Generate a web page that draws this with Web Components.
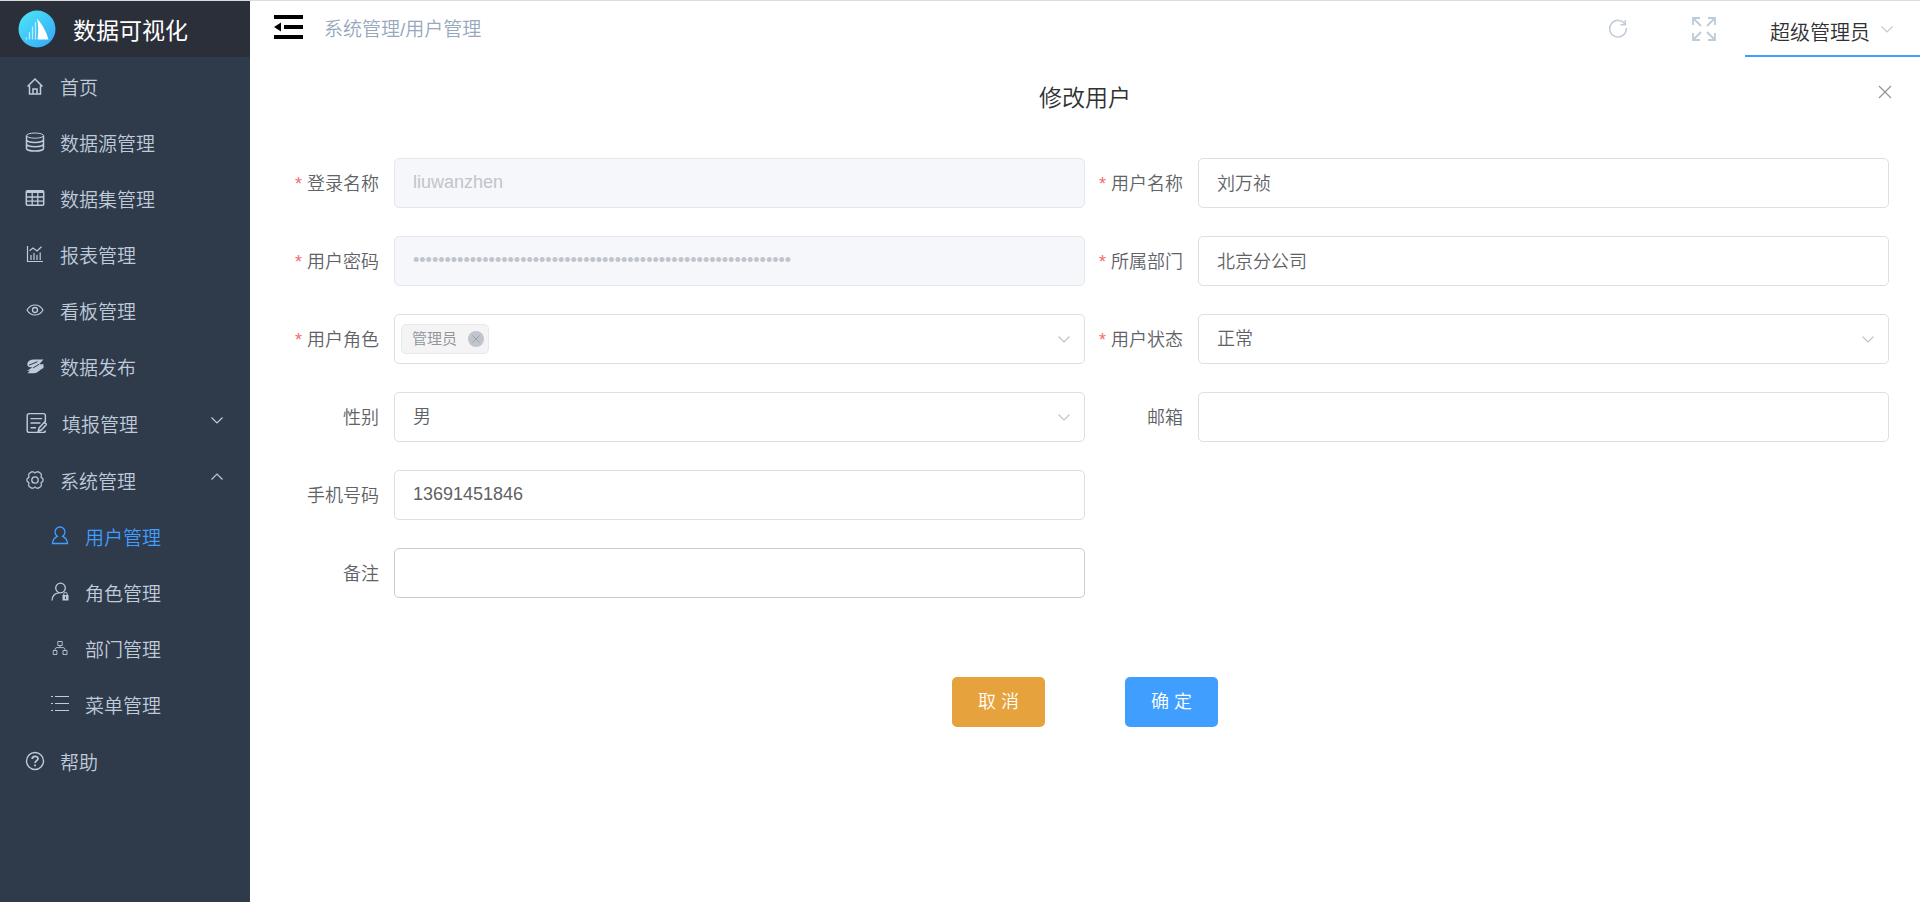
<!DOCTYPE html>
<html lang="zh-CN">
<head>
<meta charset="utf-8">
<title>数据可视化</title>
<style>
  body { margin: 0; font-family: "Liberation Sans", "Noto Sans CJK SC", sans-serif; font-weight: 350; background: #fff; color: #303133; }
</style>
</head>
<body>
<admin-app></admin-app>

<script>
const ICONS = {
  home: '<path d="M2.500 10.500 10 3l7.500 7.500M4.500 9.500V18h11V9.500M8 18v-5h4v5" stroke-width="1.500"/>',
  database: '<ellipse cx="10" cy="3.600" rx="8.500" ry="2.600"/><path d="M1.500 3.600v12.800c0 1.500 3.800 2.700 8.500 2.700s8.500-1.200 8.500-2.700V3.600M1.500 7.800c0 1.500 3.800 2.700 8.500 2.700s8.500-1.200 8.500-2.700M1.500 12c0 1.500 3.800 2.700 8.500 2.700s8.500-1.200 8.500-2.700" stroke-width="1.500"/>',
  table: '<rect x="1.300" y="2.700" width="17.400" height="14.600" rx="1" stroke-width="1.500"/><path d="M1.300 4h17.400" stroke-width="2"/><path d="M1.300 9h17.400M1.300 13.200h17.400M7.200 5v12M12.800 5v12" stroke-width="1.300"/>',
  chart: '<path d="M2.500 2v15.500H18M4.500 6.800 8 4l4 3 4.500-4.300M6 16v-5M9 16V9M12 16v-5M15.200 16V8.500" stroke-width="1.200"/>',
  eye: '<path d="M2 10c2-3.500 5-5 8-5s6 1.500 8 5c-2 3.500-5 5-8 5s-6-1.500-8-5Z" stroke-width="1.200"/><circle cx="10" cy="10" r="2.500" stroke-width="1.300"/>',
  publish: '<path fill="currentColor" stroke="none" d="M18.500 3.500H8.500C4 3.500 1.500 7 2.500 9.500c.6 1.500 2.500 2 5 1.800L1.800 15l3.200-.6-2.500 2.800h6.300c4.200 0 5.500-3.400 9.700-5.200V8.300h-4.300Z"/><path d="m4 9.200 8.500-3.500M8 12l6-3.700" stroke="#2f3a4b" stroke-width="1"/>',
  form: '<path d="M18.500 9V3.200A1.700 1.700 0 0 0 16.800 1.500H3.700A1.700 1.700 0 0 0 2 3.200v13.600a1.700 1.700 0 0 0 1.700 1.700h13.100a1.700 1.700 0 0 0 1.700-1.700M5 6h10.500M5 10h9M5 14.300h5M12 17.500l.8-3 4.800-5.200 2 1.900-4.800 5.200Z" stroke-width="1.300"/>',
  gear: '<path d="M6.500 1.900h2l1.500 1.200 1.500-1.200h2l2.500 1.700.4 1.900-.4 1.500 2 2v2l-2 2 .4 1.500-.4 1.900-2.500 1.700h-2L10 16.900l-1.500 1.200h-2L4 16.400l-.4-1.900L4 13l-2-2V9l2-2-.4-1.500.4-1.900Z" stroke-width="1.200"/><circle cx="10" cy="10" r="3.200" stroke-width="1.300"/>',
  user: '<path d="M7.300 10.300C5.700 9 5 7.800 5 6a5 5 0 0 1 10 0c0 1.800-.7 3-2.300 4.300 3 1.400 4.500 3.200 4.800 7.200h-15c.3-4 1.800-5.800 4.800-7.200Z" stroke-width="1.300"/>',
  role: '<circle cx="10.500" cy="6" r="4.800" stroke-width="1.300"/><path d="M2 18.500c.3-4.500 2.500-7.500 7-7.700" stroke-width="1.300"/><rect x="12.500" y="13" width="6" height="5.500" fill="currentColor" stroke="none"/><path d="M13.800 13v-1a1.700 1.700 0 0 1 3.400 0v1"/><path d="M15.500 14.500v2.500" stroke="#2f3a4b"/>',
  tree: '<path d="M7.800 3.500h4.400v4H7.800ZM3.200 12.500h3.700v4H3.200ZM13 12.500h4v4h-4ZM10 7.500v2M5 12.500c0-2 .4-2.900 2-2.900h6c1.600 0 2 .9 2 2.900" stroke-width=".9"/>',
  list: '<path d="M5 2.500h14M5 9.500h14M5 16.500h14M1 2.500h2M1 9.500h2M1 16.500h2"/>',
  help: '<circle cx="10" cy="10" r="8.500" stroke-width="1.400"/><path d="M7.200 8c0-3.600 5.800-3.500 5.800-.3 0 1.900-2.900 2-2.900 4.300M10.100 13.500v1.700" stroke-width="1.800"/>',
  down: '<path d="m4.500 7.500 5.500 5.500 5.500-5.500" stroke-width="1.200"/>',
  up: '<path d="m4.500 12.500 5.500-5.500 5.500 5.500" stroke-width="1.200"/>',
  refresh: '<path d="M17.200 6.500A8.300 8.300 0 1 0 18.300 10M17.300 2v4.800h-4.800" stroke-width="1.500"/>',
  close: '<path d="m4 4 12 12M16 4 4 16" stroke-width="1.200"/>'
};

const define = (name, css, html) => customElements.define(name, class extends HTMLElement {
  constructor() {
    super();
    const markup = typeof html === 'function' ? html(this) : html;
    this.attachShadow({ mode: 'open' }).innerHTML = `<style>*{box-sizing:border-box}${css}</style>${markup}`;
  }
});

define('ui-icon', `
  :host { display: inline-block; flex: none; width: 20px; height: 20px; }
  :host([name="form"]) { width: 22px; height: 22px; }
  svg { display: block; width: 100%; height: 100%; fill: none; stroke: currentColor; }
`, el => `<svg viewBox="0 0 20 20" aria-hidden="true">${ICONS[el.getAttribute('name')]}</svg>`);

define('nav-item', `
  :host { display: block; color: #bfcbd9; }
  :host([active]) { color: #409eff; }
  a { display: flex; align-items: center; gap: 15px; height: 56px; padding: 0 25px; color: inherit; font-size: 19px; text-decoration: none; }
  :host([sub]) a { padding-left: 50px; }
  span { flex: 1; }
  .arrow { width: 20px; margin: 0 -2px 6px 0; }
`, el => `<a href="#"><ui-icon name="${el.getAttribute('icon')}"></ui-icon><span><slot></slot></span>${
  el.hasAttribute('arrow') ? `<ui-icon class="arrow" name="${el.getAttribute('arrow')}"></ui-icon>` : ''}</a>`);

define('side-bar', `
  :host { display: block; background: #2f3a4b; }
  header { display: flex; align-items: center; gap: 17px; height: 56px; padding-left: 18px; background: #2b2f3a; }
  header svg { width: 38px; height: 38px; }
  h1 { margin: 0; color: #fff; font-size: 23px; font-weight: 400; }
  nav { padding-top: 1px; }
  ul { list-style: none; margin: 0; padding: 0; }
  .group { margin-top: 1px; }
`, `
  <header>
    <svg viewBox="0 0 38 38" aria-hidden="true">
      <defs><linearGradient id="sky" x1="0" y1="0" x2="1" y2="1"><stop offset="0" stop-color="#4de8f5"/><stop offset="1" stop-color="#35a5fa"/></linearGradient></defs>
      <circle cx="19" cy="19" r="18.500" fill="url(#sky)"/>
      <path d="M19 8.500C24 14 28.500 22 30.500 29.500H19.500C20.500 22 20.500 15 19 8.500Z" fill="#fff"/>
      <path d="M17.500 12v17.500M14.500 16.500v13M11.500 22v7.500M8.500 27.500v2" stroke="#b9efff" stroke-width="1.300"/>
    </svg>
    <h1>数据可视化</h1>
  </header>
  <nav>
    <ul>
      <li><nav-item icon="home">首页</nav-item></li>
      <li><nav-item icon="database">数据源管理</nav-item></li>
      <li><nav-item icon="table">数据集管理</nav-item></li>
      <li><nav-item icon="chart">报表管理</nav-item></li>
      <li><nav-item icon="eye">看板管理</nav-item></li>
      <li><nav-item icon="publish">数据发布</nav-item></li>
      <li class="group"><nav-item icon="form" arrow="down">填报管理</nav-item></li>
      <li class="group"><nav-item icon="gear" arrow="up">系统管理</nav-item>
        <ul>
          <li><nav-item sub active icon="user">用户管理</nav-item></li>
          <li><nav-item sub icon="role">角色管理</nav-item></li>
          <li><nav-item sub icon="tree">部门管理</nav-item></li>
          <li><nav-item sub icon="list">菜单管理</nav-item></li>
        </ul>
      </li>
      <li class="group"><nav-item icon="help">帮助</nav-item></li>
    </ul>
  </nav>
`);

define('top-bar', `
  :host { display: flex; align-items: center; height: 56px; padding-left: 24px; }
  button { display: block; flex: none; padding: 0; border: 0; background: none; font: inherit; color: #bfcbd9; }
  svg { display: block; }
  .menu { padding-bottom: 4px; }
  .crumb { flex: 1; margin-left: 21px; padding-bottom: 4px; color: #97a8be; font-size: 19px; }
  .crumb a { color: inherit; text-decoration: none; }
  .refresh { padding-top: 2px; }
  .full { margin: 0 29px 0 64px; }
  .user { display: flex; align-items: center; gap: 7px; align-self: stretch; width: 175px; padding: 6px 0 0 25px; border-bottom: 2px solid #409eff; color: #303133; font-size: 20px; }
  .user ui-icon { color: #bfcbd9; margin-bottom: 4px; }
`, `
  <button class="menu" aria-label="收起菜单"><svg width="29" height="24" viewBox="0 0 29 24"><path d="M0 0h29v4H0ZM10 10h19v4H10ZM0 20h29v4H0ZM0 12l7-4.500v9Z"/></svg></button>
  <nav class="crumb"><a href="#">系统管理</a>/<a href="#">用户管理</a></nav>
  <button class="refresh" aria-label="刷新"><ui-icon name="refresh"></ui-icon></button>
  <button class="full" aria-label="全屏"><svg width="24" height="24" viewBox="0 0 24 24" fill="none" stroke="currentColor" stroke-width="1.800"><path d="M1 8V1h7M1 1l8 8M16 1h7v7M23 1l-8 8M1 16v7h7M1 23l8-8M23 16v7h-7M23 23l-8-8"/></svg></button>
  <button class="user">超级管理员<ui-icon name="down"></ui-icon></button>
`);

const control = el => {
  const value = el.getAttribute('value') || '';
  switch (el.getAttribute('kind')) {
    case 'select':
      return `<select id="c"><option>${value}</option></select><ui-icon class="caret" name="down"></ui-icon>`;
    case 'tags':
      return `<div class="tags"><span class="tag">${value}<button type="button" aria-label="移除"><ui-icon name="close"></ui-icon></button></span><input id="c" readonly></div><ui-icon class="caret" name="down"></ui-icon>`;
    default:
      return `<input id="c" type="${el.getAttribute('kind') || 'text'}" value="${value}" ${el.hasAttribute('disabled') ? 'disabled' : ''}>`;
  }
};

define('form-field', `
  :host { display: grid; grid-template-columns: 113px 1fr; align-items: center; color: #606266; font-size: 18px; }
  label { padding: 0 15px 3px 0; text-align: right; white-space: nowrap; }
  label b { margin-right: 5px; color: #f56c6c; font-weight: inherit; }
  .box { position: relative; }
  input, select, .tags { display: block; width: 100%; height: 50px; margin: 0; padding: 0 18px 2px; border: 1px solid #dcdfe6; border-radius: 5px; background: #fff; color: inherit; font: inherit; outline: 0; appearance: none; }
  select { padding-bottom: 0; }
  input:disabled { background: #f5f7fa; border-color: #e4e7ed; color: #c0c4cc; }
  :host([hovered]) input { border-color: #c8ccd4; }
  .tags { display: flex; align-items: center; gap: 8px; padding: 0 6px; }
  .tags input { flex: 1; width: auto; min-width: 0; height: 40px; border: 0; }
  .tag { display: flex; align-items: center; gap: 11px; height: 30px; padding: 0 4px 0 10px; border: 1px solid #e9e9eb; border-radius: 5px; background: #f4f4f5; color: #909399; font-size: 15px; line-height: 26px; }
  .tag button { width: 16px; height: 16px; padding: 2px; border: 0; border-radius: 8px; background: #c0c4cc; color: #909399; }
  .tag ui-icon { display: block; width: 12px; height: 12px; }
  .caret { position: absolute; top: 15px; right: 11px; color: #c0c4cc; pointer-events: none; }
`, el => `<label for="c">${el.hasAttribute('required') ? '<b>*</b>' : ''}${el.getAttribute('label')}</label><div class="box">${control(el)}</div>`);

define('user-form', `
  :host { display: block; padding: 0 31px; }
  header { position: relative; padding-top: 24px; text-align: center; }
  h2 { margin: 0; font-size: 23px; font-weight: inherit; line-height: 34px; }
  .close { position: absolute; top: 25px; right: -6px; padding: 0; border: 0; background: none; color: #909399; }
  .close ui-icon { display: block; }
  .fields { display: grid; grid-template-columns: 1fr 1fr; row-gap: 28px; margin-top: 43px; }
  .solo { grid-column: 1; }
  footer { display: flex; justify-content: center; gap: 80px; margin-top: 79px; }
  footer button { width: 93px; height: 50px; padding: 0 0 4px; border: 0; border-radius: 5px; background: #409eff; color: #fff; font: inherit; font-size: 18px; }
  footer .cancel { background: #e6a23c; }
`, `
  <form>
    <header>
      <h2>修改用户</h2>
      <button type="button" class="close" aria-label="关闭"><ui-icon name="close"></ui-icon></button>
    </header>
    <div class="fields">
      <form-field required disabled label="登录名称" value="liuwanzhen"></form-field>
      <form-field required label="用户名称" value="刘万祯"></form-field>
      <form-field required disabled kind="password" label="用户密码" value="${'x'.repeat(60)}"></form-field>
      <form-field required label="所属部门" value="北京分公司"></form-field>
      <form-field required kind="tags" label="用户角色" value="管理员"></form-field>
      <form-field required kind="select" label="用户状态" value="正常"></form-field>
      <form-field kind="select" label="性别" value="男"></form-field>
      <form-field kind="email" label="邮箱"></form-field>
      <form-field class="solo" kind="tel" label="手机号码" value="13691451846"></form-field>
      <form-field class="solo" hovered label="备注"></form-field>
    </div>
    <footer>
      <button type="button" class="cancel">取 消</button>
      <button type="button">确 定</button>
    </footer>
  </form>
`);

define('admin-app', `
  :host { display: grid; grid-template-columns: 250px 1fr; min-height: 100vh; border-top: 1px solid #dcdcdc; box-sizing: border-box; }
`, `<side-bar></side-bar><main><top-bar></top-bar><user-form></user-form></main>`);
</script>
</body>
</html>
